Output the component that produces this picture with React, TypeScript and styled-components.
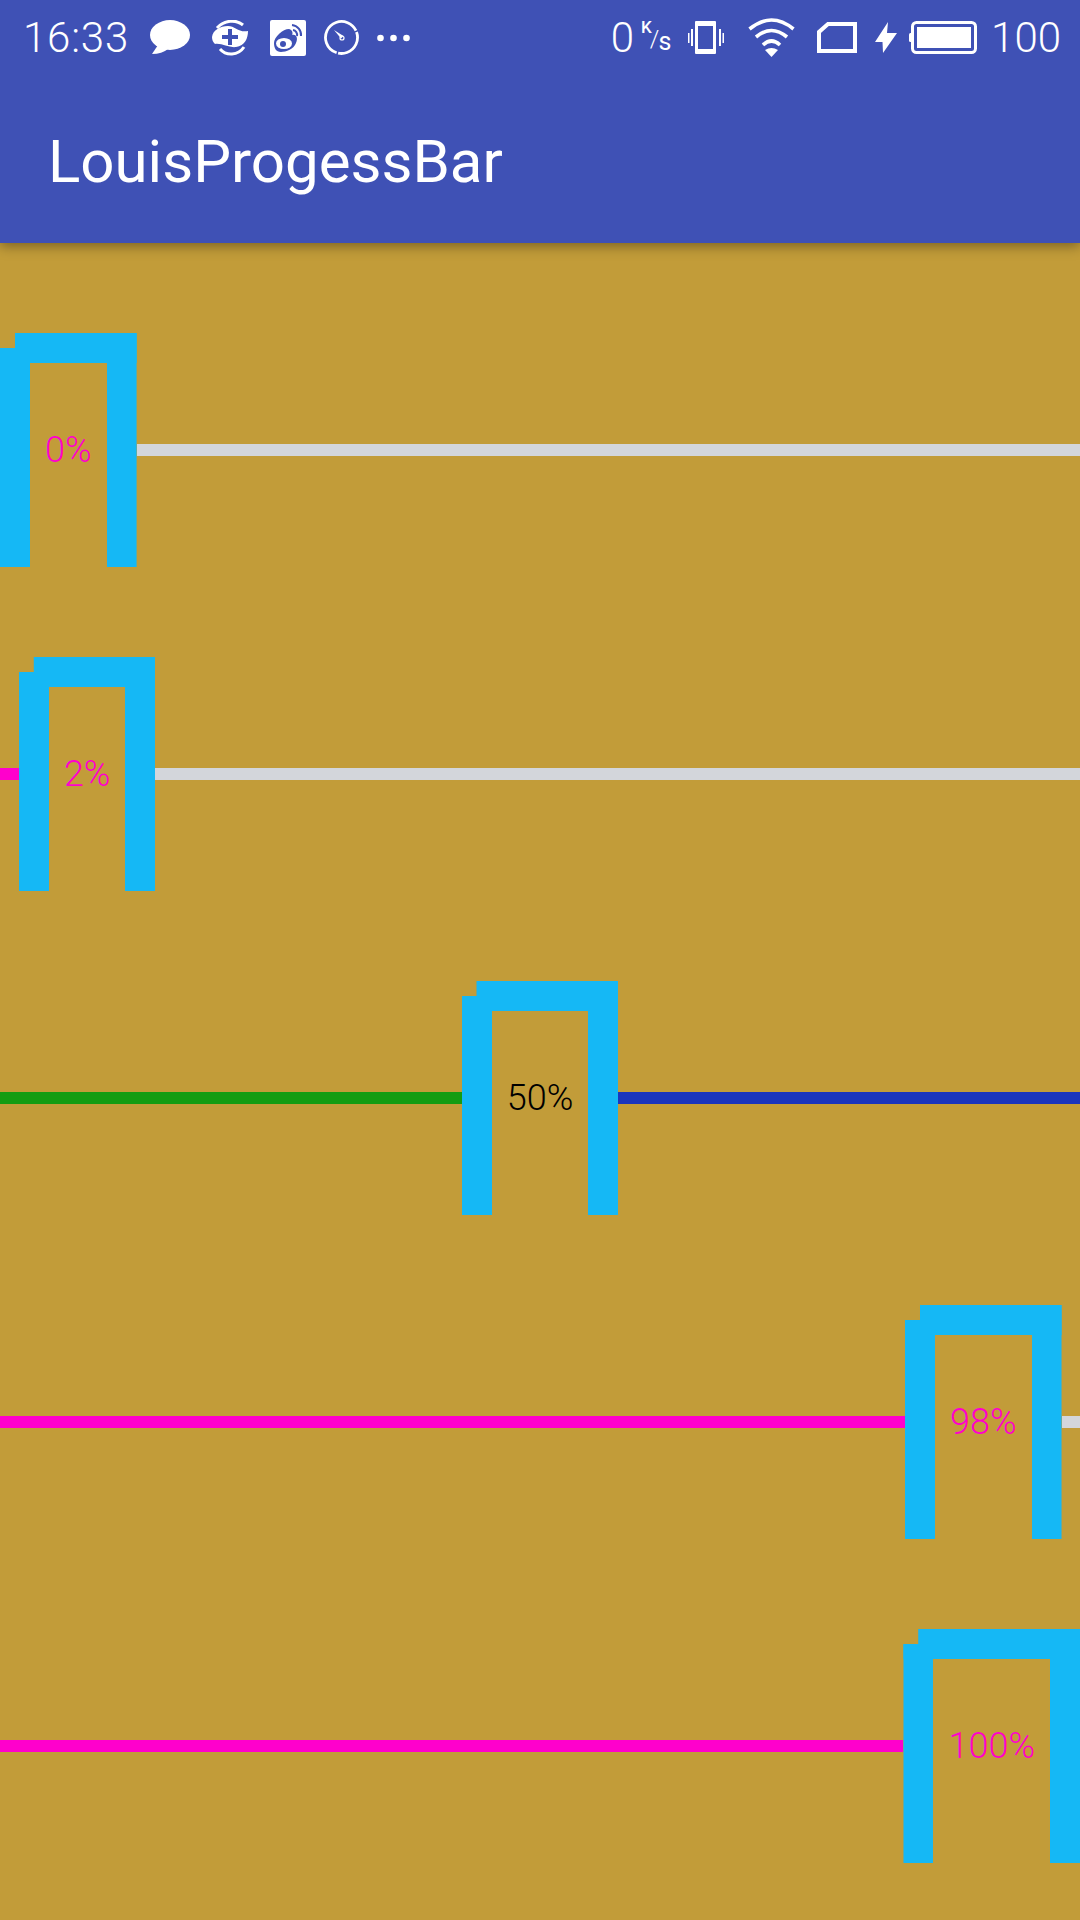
import styled, { createGlobalStyle } from "styled-components";

const GlobalStyle = createGlobalStyle`
  html, body {
    margin: 0;
    padding: 0;
    background-color: #c29c39;
  }
`;

const Screen = styled.div`
  width: 1080px;
  height: 1920px;
  overflow: hidden;
  background-color: #c29c39;
  font-family: Roboto, "Noto Sans", sans-serif;
`;

const AppBar = styled.header`
  position: relative;
  z-index: 1;
  background-color: #3f51b5;
  box-shadow: 0 3px 12px rgba(0, 0, 0, 0.38);
  color: #ffffff;
`;

const StatusBar = styled.div`
  height: 75px;
  display: flex;
  align-items: center;
  justify-content: space-between;
  padding: 0 19px 0 23px;
`;

const StatusGroup = styled.div`
  display: flex;
  align-items: center;
`;

const StatusText = styled.span<{ $gap?: number; $spacing?: number }>`
  font-size: 42px;
  font-weight: 300;
  line-height: 75px;
  margin-left: ${({ $gap }) => $gap ?? 0}px;
  letter-spacing: ${({ $spacing }) => $spacing ?? 0}px;
`;

const Glyph = styled.svg<{ $gap: number }>`
  display: block;
  flex: none;
  margin-left: ${({ $gap }) => $gap}px;
  fill: #ffffff;
`;

const SpeedUnit = styled.div`
  display: flex;
  height: 33px;
  width: 31px;
  margin-left: 7px;
  margin-top: -4px;
  line-height: 1;
`;

const UnitK = styled.span`
  font-size: 17px;
  font-weight: 500;
`;

const UnitSlash = styled.span`
  font-size: 24px;
  font-weight: 300;
  margin: 8px 0 0 -2px;
`;

const UnitS = styled.span`
  font-size: 25px;
  margin: 10px 0 0 -1px;
`;

const Toolbar = styled.div`
  height: 168px;
  box-sizing: border-box;
  display: flex;
  align-items: center;
  padding: 5px 0 0 48px;
`;

const Title = styled.h1`
  margin: 0;
  font-size: 60px;
  font-weight: 400;
  line-height: 1;
`;

const BarList = styled.main`
  display: flex;
  flex-direction: column;
  gap: 90px;
  padding-top: 90px;
`;

const BarRow = styled.div`
  display: flex;
  align-items: center;
  height: 234px;
`;

const Track = styled.div<{ $grow: number; $color: string }>`
  flex: ${({ $grow }) => $grow} 1 0;
  min-width: 0;
  height: 12px;
  background-color: ${({ $color }) => $color};
`;

const Thumb = styled.div`
  flex: none;
  box-sizing: border-box;
  display: flex;
  align-items: center;
  height: 234px;
  padding: 0 15px 30px;
  border: 30px solid #15b8f5;
  border-bottom: none;
  clip-path: polygon(0 15px, 15px 15px, 15px 0, 100% 0, 100% 100%, 0 100%);
`;

const Percent = styled.span<{ $color: string }>`
  font-size: 36px;
  font-weight: 350;
  line-height: 1;
  color: ${({ $color }) => $color};
`;

const PINK = "#ff00cc";
const GREY = "#d3d6db";

const bars = [
  { value: 0, reached: PINK, rest: GREY, text: PINK },
  { value: 2, reached: PINK, rest: GREY, text: PINK },
  { value: 50, reached: "#149c12", rest: "#1a35bd", text: "#000000" },
  { value: 98, reached: PINK, rest: GREY, text: PINK },
  { value: 100, reached: PINK, rest: GREY, text: PINK },
];

function LeftIcons() {
  return (
    <>
      <Glyph $gap={21} width="40" height="35" viewBox="0 0 40 35">
        <ellipse cx="20" cy="15" rx="20" ry="15" />
        <path d="M8 25 L2 34 Q12 34 18 29 Z" />
      </Glyph>
      <Glyph $gap={22} width="36" height="36" viewBox="0 0 36 36">
        <path d="M0 17 C1 10 8 6 16 6 C23 6 27 13 36 11 C36 18 33 26 24 27 C17 28 10 23 3 24 C1 22 0 20 0 17 Z" />
        <path d="M5 8 C12 0 24 -1 31 5" fill="none" stroke="#fff" strokeWidth="3" />
        <path d="M8 29 C14 36 26 36 32 27" fill="none" stroke="#fff" strokeWidth="3" />
        <path d="M16 9 H20 V15 H26 V19 H20 V25 H16 V19 H10 V15 H16 Z" fill="#3f51b5" />
      </Glyph>
      <Glyph $gap={22} width="36" height="36" viewBox="0 0 36 36">
        <rect width="36" height="36" rx="2" />
        <path d="M4 23 C4 17 13 9 19 9 C23 10 23 14 22 15 C27 14 28 19 26 23 C24 29 16 32 11 32 C6 32 4 28 4 23 Z" fill="#3f51b5" />
        <ellipse cx="14" cy="23.5" rx="8" ry="5.5" />
        <circle cx="13" cy="24" r="3" fill="#3f51b5" />
        <path d="M22 5 A10 10 0 0 1 31 16" fill="none" stroke="#3f51b5" strokeWidth="2" />
        <path d="M23 10 A5 5 0 0 1 27 16" fill="none" stroke="#3f51b5" strokeWidth="2" />
      </Glyph>
      <Glyph $gap={18} width="35" height="35" viewBox="0 0 35 35">
        <circle
          cx="17.5"
          cy="17.5"
          r="16"
          pathLength={100}
          fill="none"
          stroke="#fff"
          strokeWidth="2.8"
          strokeDasharray="34 1.5 63 1.5"
          transform="rotate(-20 17.5 17.5)"
        />
        <path d="M10 10 L19.5 16 L17 18.5 Z" />
        <circle cx="18" cy="18" r="2" fill="none" stroke="#fff" strokeWidth="1.2" />
      </Glyph>
      <Glyph $gap={18} width="33" height="8" viewBox="0 0 33 8">
        <circle cx="3.5" cy="4" r="3.3" />
        <circle cx="16.5" cy="4" r="3.3" />
        <circle cx="29.5" cy="4" r="3.3" />
      </Glyph>
    </>
  );
}

function RightIcons() {
  return (
    <>
      <StatusText>0</StatusText>
      <SpeedUnit>
        <UnitK>K</UnitK>
        <UnitSlash>/</UnitSlash>
        <UnitS>s</UnitS>
      </SpeedUnit>
      <Glyph $gap={16} width="36" height="33" viewBox="0 0 36 33">
        <rect x="0" y="12" width="1.5" height="10" />
        <rect x="3" y="8" width="2" height="17" />
        <path d="M8 0 H27 A1 1 0 0 1 28 1 V32 A1 1 0 0 1 27 33 H8 A1 1 0 0 1 7 32 V1 A1 1 0 0 1 8 0 Z M10 5 V28 H25 V5 Z" fillRule="evenodd" />
        <rect x="31" y="8" width="2" height="17" />
        <rect x="34.5" y="12" width="1.5" height="10" />
      </Glyph>
      <Glyph $gap={24} width="47" height="39" viewBox="0 0 47 39">
        <path d="M1.5 11 Q23.5 -7 45.5 11" fill="none" stroke="#fff" strokeWidth="3.6" />
        <path d="M8 19 Q23.5 6 39 19" fill="none" stroke="#fff" strokeWidth="3.6" />
        <path d="M15 27 Q23.5 19 32 27" fill="none" stroke="#fff" strokeWidth="3.6" />
        <path d="M17 32 Q23.5 28 30 32 L23.5 39 Z" />
      </Glyph>
      <Glyph $gap={22} width="40" height="31" viewBox="0 0 40 31">
        <path d="M11 2 H38 V29 H2 V10 Z" fill="none" stroke="#fff" strokeWidth="4" />
      </Glyph>
      <Glyph $gap={18} width="22" height="31" viewBox="0 0 22 31">
        <polygon points="13,0 0,20 7.5,20 8,31 22,11 12,11" />
      </Glyph>
      <Glyph $gap={12} width="68" height="33" viewBox="0 0 68 33">
        <rect x="0" y="12" width="4" height="9" rx="1.5" />
        <rect x="3.5" y="1.5" width="63" height="30" rx="4" fill="none" stroke="#fff" strokeWidth="3" />
        <rect x="8" y="6" width="54" height="21" />
      </Glyph>
      <StatusText $gap={14}>100</StatusText>
    </>
  );
}

export default function App() {
  return (
    <Screen>
      <GlobalStyle />
      <AppBar>
        <StatusBar>
          <StatusGroup>
            <StatusText $spacing={0.8}>16:33</StatusText>
            <LeftIcons />
          </StatusGroup>
          <StatusGroup>
            <RightIcons />
          </StatusGroup>
        </StatusBar>
        <Toolbar>
          <Title>LouisProgessBar</Title>
        </Toolbar>
      </AppBar>
      <BarList>
        {bars.map((bar) => (
          <BarRow key={bar.value}>
            <Track $grow={bar.value} $color={bar.reached} />
            <Thumb>
              <Percent $color={bar.text}>{bar.value}%</Percent>
            </Thumb>
            <Track $grow={100 - bar.value} $color={bar.rest} />
          </BarRow>
        ))}
      </BarList>
    </Screen>
  );
}
